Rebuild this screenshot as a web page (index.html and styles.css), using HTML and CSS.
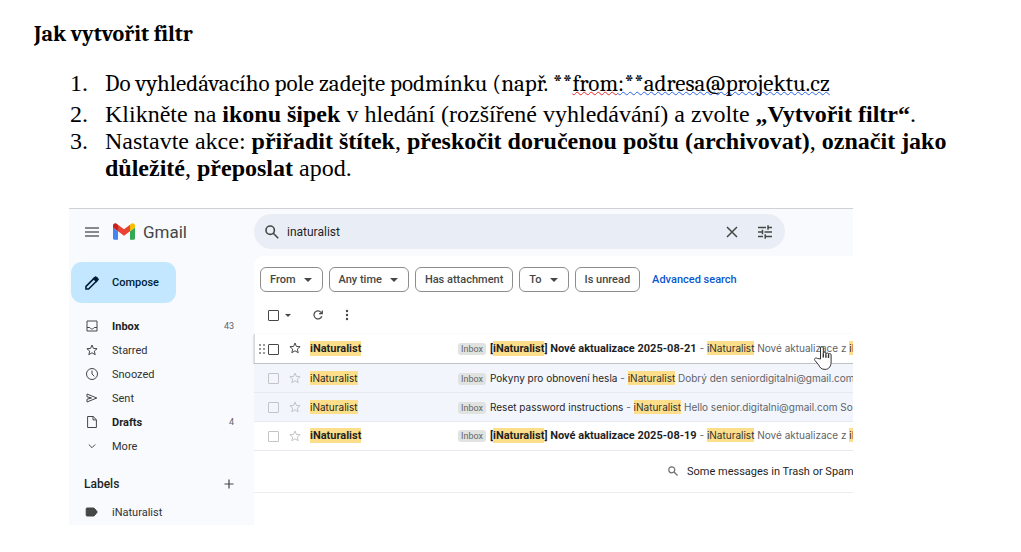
FILE: index.html
```
<!DOCTYPE html>
<html lang="cs">
<head>
    <meta charset="UTF-8">
    <meta name="viewport" content="width=device-width, initial-scale=1.0">
    <title>Jak vytvořit filtr</title>
    <link rel="stylesheet" href="styles.css">
</head>
<body>
    <h1>Jak vytvořit filtr</h1>
    <ol class="steps">
        <li class="first"><span class="cambria">Do vyhledávacího pole zadejte podmínku (např. **<span class="spelling">from</span><span class="grammar">:**adresa@projektu.cz</span></span></li>
        <li>Klikněte na <b>ikonu šipek</b> v hledání (rozšířené vyhledávání) a zvolte <b>„Vytvořit filtr“</b>.</li>
        <li>Nastavte akce: <b>přiřadit štítek</b>, <b>přeskočit doručenou poštu (archivovat)</b>, <b>označit jako důležité</b>, <b>přeposlat</b> apod.</li>
    </ol>

    <div class="gmail" lang="en">
        <!-- top bar -->
        <header class="topbar">
            <div class="brand">
                <button class="icon-btn" aria-label="Main menu">
                    <svg width="14" height="10" viewBox="0 0 14 10" fill="none" stroke="#5f6368" stroke-width="1.4"><path d="M0 1h14M0 5h14M0 9h14"/></svg>
                </button>
                <svg class="logo" width="22" height="17" viewBox="52 42 88 66">
                    <path fill="#4285f4" d="M58 108h14V74L52 59v43c0 3.32 2.69 6 6 6"/>
                    <path fill="#34a853" d="M120 108h14c3.32 0 6-2.69 6-6V59l-20 15"/>
                    <path fill="#fbbc04" d="M120 48v26l20-15v-8c0-7.42-8.47-11.65-14.4-7.2"/>
                    <path fill="#ea4335" d="M72 74V48l24 18 24-18v26L96 92"/>
                    <path fill="#c5221f" d="M52 51v8l20 15V48l-5.6-4.2c-5.94-4.45-14.4-.22-14.4 7.2"/>
                </svg>
                <span class="brand-name">Gmail</span>
            </div>
            <form class="search">
                <button type="button" class="icon-btn" aria-label="Search">
                    <svg width="14" height="14" viewBox="0 0 14 14" fill="none" stroke="#444746" stroke-width="1.6"><circle cx="5.2" cy="5.2" r="4.2"/><path d="M8.3 8.3l4.9 4.9"/></svg>
                </button>
                <input type="text" value="inaturalist" aria-label="Search mail">
                <button type="button" class="icon-btn" aria-label="Clear search">
                    <svg width="12" height="12" viewBox="0 0 12 12" fill="none" stroke="#444746" stroke-width="1.5"><path d="M1 1l10 10M11 1L1 11"/></svg>
                </button>
                <button type="button" class="icon-btn" aria-label="Show search options">
                    <svg width="14" height="14" viewBox="0 0 14 14" fill="none" stroke="#444746" stroke-width="1.5"><path d="M0 2.5h8M10 2.5h4M10 .2v4.6M0 7h4M6.5 7H14M4.5 4.7v4.6M0 11.5h5M7 11.5h7M7.2 9.2v4.6"/></svg>
                </button>
            </form>
        </header>

        <div class="content">
            <nav class="sidebar">
                <button class="compose">
                    <svg width="14" height="14" viewBox="0 0 14 14" fill="none" stroke="#001d35" stroke-width="1.6"><path d="M1 13v-2.6L9.8 1.6a1.2 1.2 0 0 1 1.7 0l.9.9a1.2 1.2 0 0 1 0 1.7L3.6 13z"/><path d="M8.8 2.6l2.6 2.6 1.4-1.8-2.2-2.2z" fill="#001d35"/></svg>
                    Compose
                </button>
                <ul class="folders">
                    <li class="unread">
                        <svg viewBox="0 0 14 14"><path d="M2 2h10v10H2zM2 8.5h2.8c.4 1 1.2 1.5 2.2 1.5s1.8-.5 2.2-1.5H12"/></svg>
                        <a href="#inbox">Inbox</a><span class="count">43</span>
                    </li>
                    <li>
                        <svg viewBox="0 0 14 14"><path d="M7 2l1.4 3.4 3.7.3-2.8 2.4.9 3.600L7 9.800l-3.200 1.900.9-3.600-2.800-2.400 3.700-.3z"/></svg>
                        <a href="#starred">Starred</a>
                    </li>
                    <li>
                        <svg viewBox="0 0 14 14"><circle cx="7" cy="7" r="5.5"/><path d="M7 3.5V7l2.4 2.3"/></svg>
                        <a href="#snoozed">Snoozed</a>
                    </li>
                    <li>
                        <svg viewBox="0 0 14 14"><path d="M2 3l9.8 4L2 11V8.2L6.5 7 2 5.800z"/></svg>
                        <a href="#sent">Sent</a>
                    </li>
                    <li class="unread">
                        <svg viewBox="0 0 14 14"><path d="M2.6 1.5h5.6l3.2 3.200v7.800H2.600zM8 1.500v3.400h3.400"/></svg>
                        <a href="#drafts">Drafts</a><span class="count">4</span>
                    </li>
                    <li>
                        <svg viewBox="0 0 14 14"><path d="M3.8 5.5L7 8.700l3.200-3.200"/></svg>
                        <a href="#more">More</a>
                    </li>
                </ul>
                <div class="labels-head">
                    <h2>Labels</h2>
                    <button class="icon-btn" aria-label="Create new label">
                        <svg width="10" height="10" viewBox="0 0 10 10" stroke="#444746" stroke-width="1.2"><path d="M5 .5v9M.5 5h9"/></svg>
                    </button>
                </div>
                <ul class="folders">
                    <li>
                        <svg viewBox="0 0 14 14"><path class="solid" d="M2 3h6.500c.5 0 .8.200 1.100.6L12.300 7l-2.700 3.400c-.3.400-.6.600-1.100.6H2c-.6 0-.800-.400-.800-.800V3.800c0-.4.200-.8.800-.8z"/></svg>
                        <a href="#inaturalist">iNaturalist</a>
                    </li>
                </ul>
            </nav>

            <main class="mail">
                <div class="chips">
                    <button class="chip">From <i class="caret"></i></button>
                    <button class="chip">Any time <i class="caret"></i></button>
                    <button class="chip">Has attachment</button>
                    <button class="chip">To <i class="caret"></i></button>
                    <button class="chip">Is unread</button>
                    <a href="#advanced">Advanced search</a>
                </div>
                <div class="toolbar">
                    <input type="checkbox" aria-label="Select all">
                    <i class="caret small"></i>
                    <button class="icon-btn refresh" aria-label="Refresh">
                        <svg width="10" height="10" viewBox="0 0 10 10" fill="none" stroke="#444746" stroke-width="1.2"><path d="M8.800 6.200A4 4 0 1 1 8 2.300L9.200 3.500M9.300.5v3.200H6.100"/></svg>
                    </button>
                    <button class="icon-btn" aria-label="More options">
                        <svg width="4" height="12" viewBox="0 0 4 12" fill="#444746"><circle cx="2" cy="2" r="1.2"/><circle cx="2" cy="6" r="1.2"/><circle cx="2" cy="10" r="1.2"/></svg>
                    </button>
                </div>
                <table class="messages">
                    <tbody>
                        <tr class="unread hovered">
                            <td class="select">
                                <svg class="grip" width="6" height="10" viewBox="0 0 6 10" fill="#9a9c9e"><path d="M0 0h2v2H0zM4 0h2v2H4zM0 4h2v2H0zM4 4h2v2H4zM0 8h2v2H0zM4 8h2v2H4z"/></svg><input type="checkbox" aria-label="Select message">
                            </td>
                            <td class="star"><svg viewBox="0 0 14 14"><path d="M7 2l1.400 3.400 3.700.3-2.800 2.400.9 3.600L7 9.800l-3.200 1.900.9-3.600-2.800-2.400 3.700-.3z"/></svg></td>
                            <td class="sender"><mark>iNaturalist</mark></td>
                            <td class="subject"><span class="tag">Inbox</span><b>[<mark>iNaturalist</mark>] Nové aktualizace 2025-08-21</b><span class="snippet"> - <mark>iNaturalist</mark> Nové aktualizace z <mark>iNaturalist</mark></span></td>
                        </tr>
                        <tr>
                            <td class="select"><input type="checkbox" aria-label="Select message"></td>
                            <td class="star"><svg viewBox="0 0 14 14"><path d="M7 2l1.400 3.400 3.700.3-2.800 2.400.9 3.600L7 9.800l-3.200 1.900.9-3.600-2.800-2.400 3.700-.3z"/></svg></td>
                            <td class="sender"><mark>iNaturalist</mark></td>
                            <td class="subject"><span class="tag">Inbox</span>Pokyny pro obnovení hesla<span class="snippet"> - <mark>iNaturalist</mark> Dobrý den seniordigitalni@gmail.com Někdo</span></td>
                        </tr>
                        <tr>
                            <td class="select"><input type="checkbox" aria-label="Select message"></td>
                            <td class="star"><svg viewBox="0 0 14 14"><path d="M7 2l1.400 3.400 3.700.3-2.800 2.400.9 3.600L7 9.800l-3.200 1.900.9-3.600-2.800-2.400 3.700-.3z"/></svg></td>
                            <td class="sender"><mark>iNaturalist</mark></td>
                            <td class="subject"><span class="tag">Inbox</span>Reset password instructions<span class="snippet"> - <mark>iNaturalist</mark> Hello senior.digitalni@gmail.com Someone</span></td>
                        </tr>
                        <tr class="unread">
                            <td class="select"><input type="checkbox" aria-label="Select message"></td>
                            <td class="star"><svg viewBox="0 0 14 14"><path d="M7 2l1.400 3.400 3.700.3-2.800 2.400.9 3.600L7 9.800l-3.200 1.900.9-3.600-2.800-2.400 3.700-.3z"/></svg></td>
                            <td class="sender"><mark>iNaturalist</mark></td>
                            <td class="subject"><span class="tag">Inbox</span><b>[<mark>iNaturalist</mark>] Nové aktualizace 2025-08-19</b><span class="snippet"> - <mark>iNaturalist</mark> Nové aktualizace z <mark>iNaturalist</mark></span></td>
                        </tr>
                    </tbody>
                </table>
                <p class="notice">
                    <svg width="10" height="10" viewBox="0 0 10 10" fill="none" stroke="#6b6e70" stroke-width="1.2"><circle cx="3.8" cy="3.8" r="3"/><path d="M6 6l3.5 3.5"/></svg>
                    <span>Some messages in Trash or Spam match your search.</span>
                </p>
            </main>
        </div>

        <svg class="cursor" width="20" height="26" viewBox="0 0 20 26" fill="#fff" stroke="#333" stroke-linejoin="round"><path d="M7.500 14V3a1.400 1.400 0 0 1 2.800 0v5.500a1.300 1.300 0 0 1 2.600 0v.7a1.300 1.300 0 0 1 2.600 0v.7a1.300 1.300 0 0 1 2.600 0v7c0 4-2 7.500-6 7.500-3.500 0-5-1.500-6.500-4.500l-3.700-4.500c-1.200-1.700.8-3.200 2.400-2z"/><path d="M10.300 8.500v4M12.900 9.200v3.600M15.500 10v3" stroke-width="1.400"/></svg>
    </div>
</body>
</html>
```
FILE: styles.css
```
* {
    box-sizing: border-box;
}
body {
    margin: 0;
    padding: 20px 34px;
    background-color: #fff;
    color: #000;
    font-family: 'Liberation Serif', serif;
}
h1 {
    margin: 0 0 20px;
    font-family: Cambria, 'Liberation Serif', serif;
    font-size: 22px;
    line-height: 28px;
}
.steps {
    margin: 0 40px 26px 0;
    padding-left: 71px;
    font-size: 24px;
    line-height: 27px;
    list-style: none;
    counter-reset: step;
}
.steps li {
    counter-increment: step;
}
.steps li::before {
    content: counter(step) ".";
    display: inline-block;
    width: 35px;
    margin-left: -35px;
}
.steps .first {
    margin-bottom: 2px;
    line-height: 31px;
}
.cambria {
    font-family: Cambria, 'Liberation Serif', serif;
    font-size: 23px;
}
.spelling, .grammar {
    text-decoration: underline wavy #e3262b 1px;
    text-decoration-skip-ink: none;
    text-underline-offset: 0;
}
.grammar {
    text-decoration-color: #2b63e3;
}

/* Gmail window */
.gmail {
    position: relative;
    margin: 0 134px 0 35px;
    overflow: hidden;
    border-top: 1px solid #cfd1d4;
    background-color: #f8fafd;
    color: #1f1f1f;
    font-family: Roboto, sans-serif;
    font-size: 11px;
}
button, input {
    font-family: inherit;
    font-size: inherit;
    color: inherit;
}
a {
    color: inherit;
    text-decoration: none;
}
.icon-btn {
    display: flex;
    padding: 0;
    border: none;
    background: none;
    cursor: pointer;
}
.topbar {
    display: flex;
    align-items: center;
    height: 47px;
    padding-bottom: 2px;
}
.brand {
    display: flex;
    align-items: center;
    width: 185px;
    padding-left: 16px;
}
.logo {
    margin: 0 8px 0 14px;
}
.brand-name {
    color: #444746;
    font-size: 17px;
}
.search {
    display: flex;
    flex: 1;
    align-items: center;
    height: 35px;
    margin-right: 68px;
    padding: 0 13px 0 11px;
    border-radius: 18px;
    background-color: #e9eef6;
}
.search input {
    flex: 1;
    min-width: 0;
    padding: 0 8px;
    border: none;
    outline: none;
    background: none;
    font-size: 12px;
}
.search .icon-btn:last-child {
    margin-left: 20px;
}
.content {
    display: flex;
}

/* sidebar */
.sidebar {
    width: 185px;
    padding: 6px 20px 1px 2px;
}
.compose {
    display: flex;
    align-items: center;
    gap: 13px;
    height: 41px;
    margin-bottom: 11px;
    padding: 0 17px 0 14px;
    border: none;
    border-radius: 11px;
    background-color: #c2e7ff;
    color: #001d35;
    font-weight: 500;
}
.folders {
    margin: 0;
    padding: 0 0 0 14px;
    list-style: none;
}
.folders li {
    display: flex;
    align-items: center;
    height: 24px;
    color: #303234;
}
.folders svg {
    width: 14px;
    height: 14px;
    margin-right: 13px;
    fill: none;
    stroke: #444746;
}
.folders .solid {
    fill: #444746;
}
.folders .unread a {
    color: #1f1f1f;
    font-weight: 700;
}
.count {
    margin-left: auto;
    color: #5f6368;
    font-size: 9px;
}
.labels-head {
    display: flex;
    align-items: center;
    justify-content: space-between;
    height: 28px;
    margin: 12px 0 2px 13px;
}
.labels-head h2 {
    margin: 0;
    font-size: 12px;
    font-weight: 500;
}

/* message list */
.mail {
    flex: 1;
    min-width: 0;
    border-top-left-radius: 10px;
    background-color: #fff;
}
.chips {
    display: flex;
    align-items: center;
    gap: 6px;
    padding: 11px 6px;
    white-space: nowrap;
}
.chip {
    display: flex;
    align-items: center;
    gap: 8px;
    height: 25px;
    padding: 0 9px;
    border: 1px solid #8b8d8f;
    border-radius: 6px;
    background-color: #fff;
    color: #444746;
    font-weight: 500;
}
.chips a {
    margin-left: 6px;
    color: #0b57d0;
    font-weight: 500;
}
.caret {
    margin-right: 1px;
    border: 4px solid transparent;
    border-top-color: #444746;
    border-bottom: none;
}
.caret.small {
    margin: 0;
    border-width: 3px;
    border-bottom: none;
}
.toolbar {
    display: flex;
    align-items: center;
    height: 24px;
    margin-bottom: 7px;
    padding-left: 14px;
}
input[type="checkbox"] {
    appearance: none;
    flex: none;
    width: 11px;
    height: 11px;
    margin: 0;
    border: 1px solid #c2c4c6;
    border-radius: 1px;
}
.toolbar input[type="checkbox"],
.hovered input[type="checkbox"] {
    border-color: #444746;
}
.toolbar .caret {
    margin-left: 6px;
}
.refresh {
    margin: 0 22px;
}
.messages {
    width: 100%;
    table-layout: fixed;
    border-collapse: collapse;
}
.messages tr {
    height: 29px;
    background-color: #f2f6fc;
    font-family: Inter, sans-serif;
    font-size: 10px;
}
.messages .unread {
    background-color: #fff;
}
.messages td {
    padding: 0;
    border-bottom: 1px solid #e6eaf0;
    overflow: hidden;
    white-space: nowrap;
}
.messages .hovered {
    box-shadow: inset 1px 0 0 #d5d7da, 0 1px 2px #b5b8bc;
}
.messages .hovered td {
    border-bottom-color: #bfc2c5;
}
.messages .select {
    width: 34px;
    padding-right: 9px;
    text-align: right;
}
.select input, .select svg {
    vertical-align: middle;
}
.grip {
    margin-right: 3px;
}
.star {
    width: 22px;
}
.star svg {
    display: block;
    width: 14px;
    height: 14px;
    fill: none;
    stroke: #c2c4c6;
}
.hovered .star svg {
    stroke: #444746;
}
.messages .sender {
    width: 148px;
}
.unread .sender, .subject b {
    font-family: Roboto, sans-serif;
    font-size: 11px;
    font-weight: 700;
}
mark {
    padding: 1px 0;
    background-color: #fddf8b;
    color: inherit;
}
.tag {
    margin-right: 4px;
    padding: 1px 3px;
    border-radius: 3px;
    background-color: #e1e3e1;
    color: #666;
    font-family: Roboto, sans-serif;
    font-size: 9px;
}
.snippet {
    color: #5f6368;
}
.snippet mark {
    color: #303234;
}
.notice {
    display: flex;
    align-items: center;
    gap: 9px;
    height: 42px;
    margin: 0;
    padding-left: 414px;
    border-bottom: 1px solid #eceef0;
    overflow: hidden;
    white-space: nowrap;
}
.notice svg {
    flex: none;
}

.cursor {
    position: absolute;
    top: 136px;
    right: 20px;
}
```
